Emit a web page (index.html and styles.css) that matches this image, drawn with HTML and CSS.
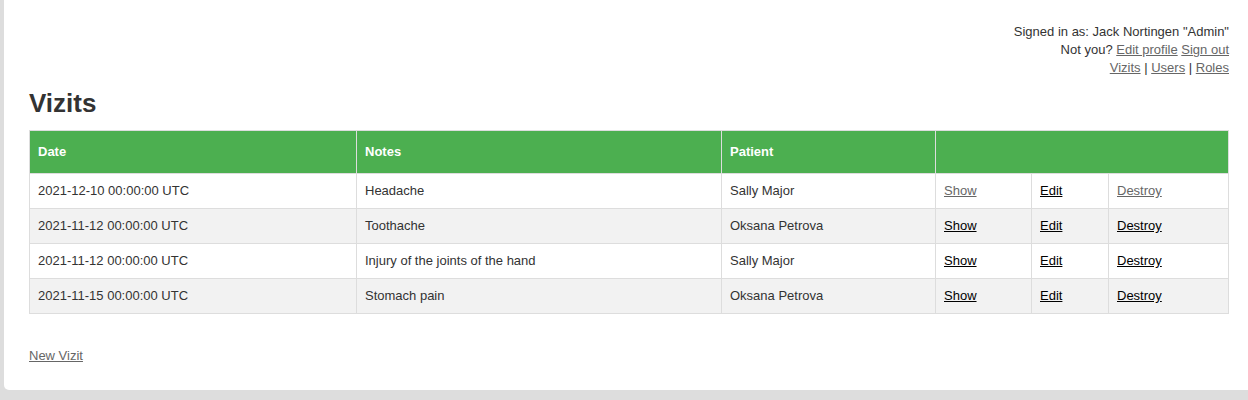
FILE: index.html
```html
<!DOCTYPE html>
<html lang="en">
<head>
<meta charset="utf-8">
<title>Vizits</title>
<link rel="stylesheet" href="styles.css">
</head>
<body>
<div class="card">
  <div class="account">
    <div>Signed in as: Jack Nortingen "Admin"</div>
    <div>Not you? <a class="visited" href="#">Edit profile</a> <a class="visited" href="#">Sign out</a></div>
    <div><a class="visited" href="#">Vizits</a> | <a class="visited" href="#">Users</a> | <a class="visited" href="#">Roles</a></div>
  </div>
  <h1 class="title">Vizits</h1>
  <table class="grid">
    <colgroup>
      <col class="c-date"><col class="c-notes"><col class="c-patient"><col class="c-show"><col class="c-edit"><col class="c-destroy">
    </colgroup>
    <thead>
      <tr><th>Date</th><th>Notes</th><th>Patient</th><th colspan="3"></th></tr>
    </thead>
    <tbody>
      <tr><td>2021-12-10 00:00:00 UTC</td><td>Headache</td><td>Sally Major</td><td><a class="visited" href="#">Show</a></td><td><a href="#">Edit</a></td><td><a class="visited" href="#">Destroy</a></td></tr>
      <tr><td>2021-11-12 00:00:00 UTC</td><td>Toothache</td><td>Oksana Petrova</td><td><a href="#">Show</a></td><td><a href="#">Edit</a></td><td><a href="#">Destroy</a></td></tr>
      <tr><td>2021-11-12 00:00:00 UTC</td><td>Injury of the joints of the hand</td><td>Sally Major</td><td><a href="#">Show</a></td><td><a href="#">Edit</a></td><td><a href="#">Destroy</a></td></tr>
      <tr><td>2021-11-15 00:00:00 UTC</td><td>Stomach pain</td><td>Oksana Petrova</td><td><a href="#">Show</a></td><td><a href="#">Edit</a></td><td><a href="#">Destroy</a></td></tr>
    </tbody>
  </table>
  <div class="actions"><a class="visited" href="#">New Vizit</a></div>
</div>
</body>
</html>
```
FILE: styles.css
```css
html, body {
  margin: 0;
  padding: 0;
}
body {
  background: #dddddd;
  color: #333333;
  font-family: "Liberation Sans", Arial, sans-serif;
  font-size: 13px;
  line-height: 18px;
  overflow: hidden;
}
a {
  color: #000000;
}
a.visited {
  color: #666666;
}
.card {
  background: #ffffff;
  margin-left: 4px;
  width: 1199px;
  padding: 23px 25px 25px;
  border-radius: 0 0 5px 5px;
}
.account {
  text-align: right;
  margin-right: -1px;
}
.title {
  font-size: 26px;
  line-height: 29px;
  font-weight: bold;
  margin: 12px 0 12px;
}
.grid {
  border-collapse: collapse;
  table-layout: fixed;
  width: 1199px;
}
.c-date { width: 327px; }
.c-notes { width: 365px; }
.c-patient { width: 214px; }
.c-show { width: 96px; }
.c-edit { width: 77px; }
.c-destroy { width: 120px; }
.grid th, .grid td {
  border: 1px solid #dddddd;
  padding: 8px;
  text-align: left;
}
.grid th {
  padding-top: 12px;
  padding-bottom: 12px;
  background: #4caf50;
  color: #ffffff;
  font-weight: bold;
}
.grid tbody tr:nth-child(even) {
  background: #f2f2f2;
}
.actions {
  margin-top: 33px;
}
```
